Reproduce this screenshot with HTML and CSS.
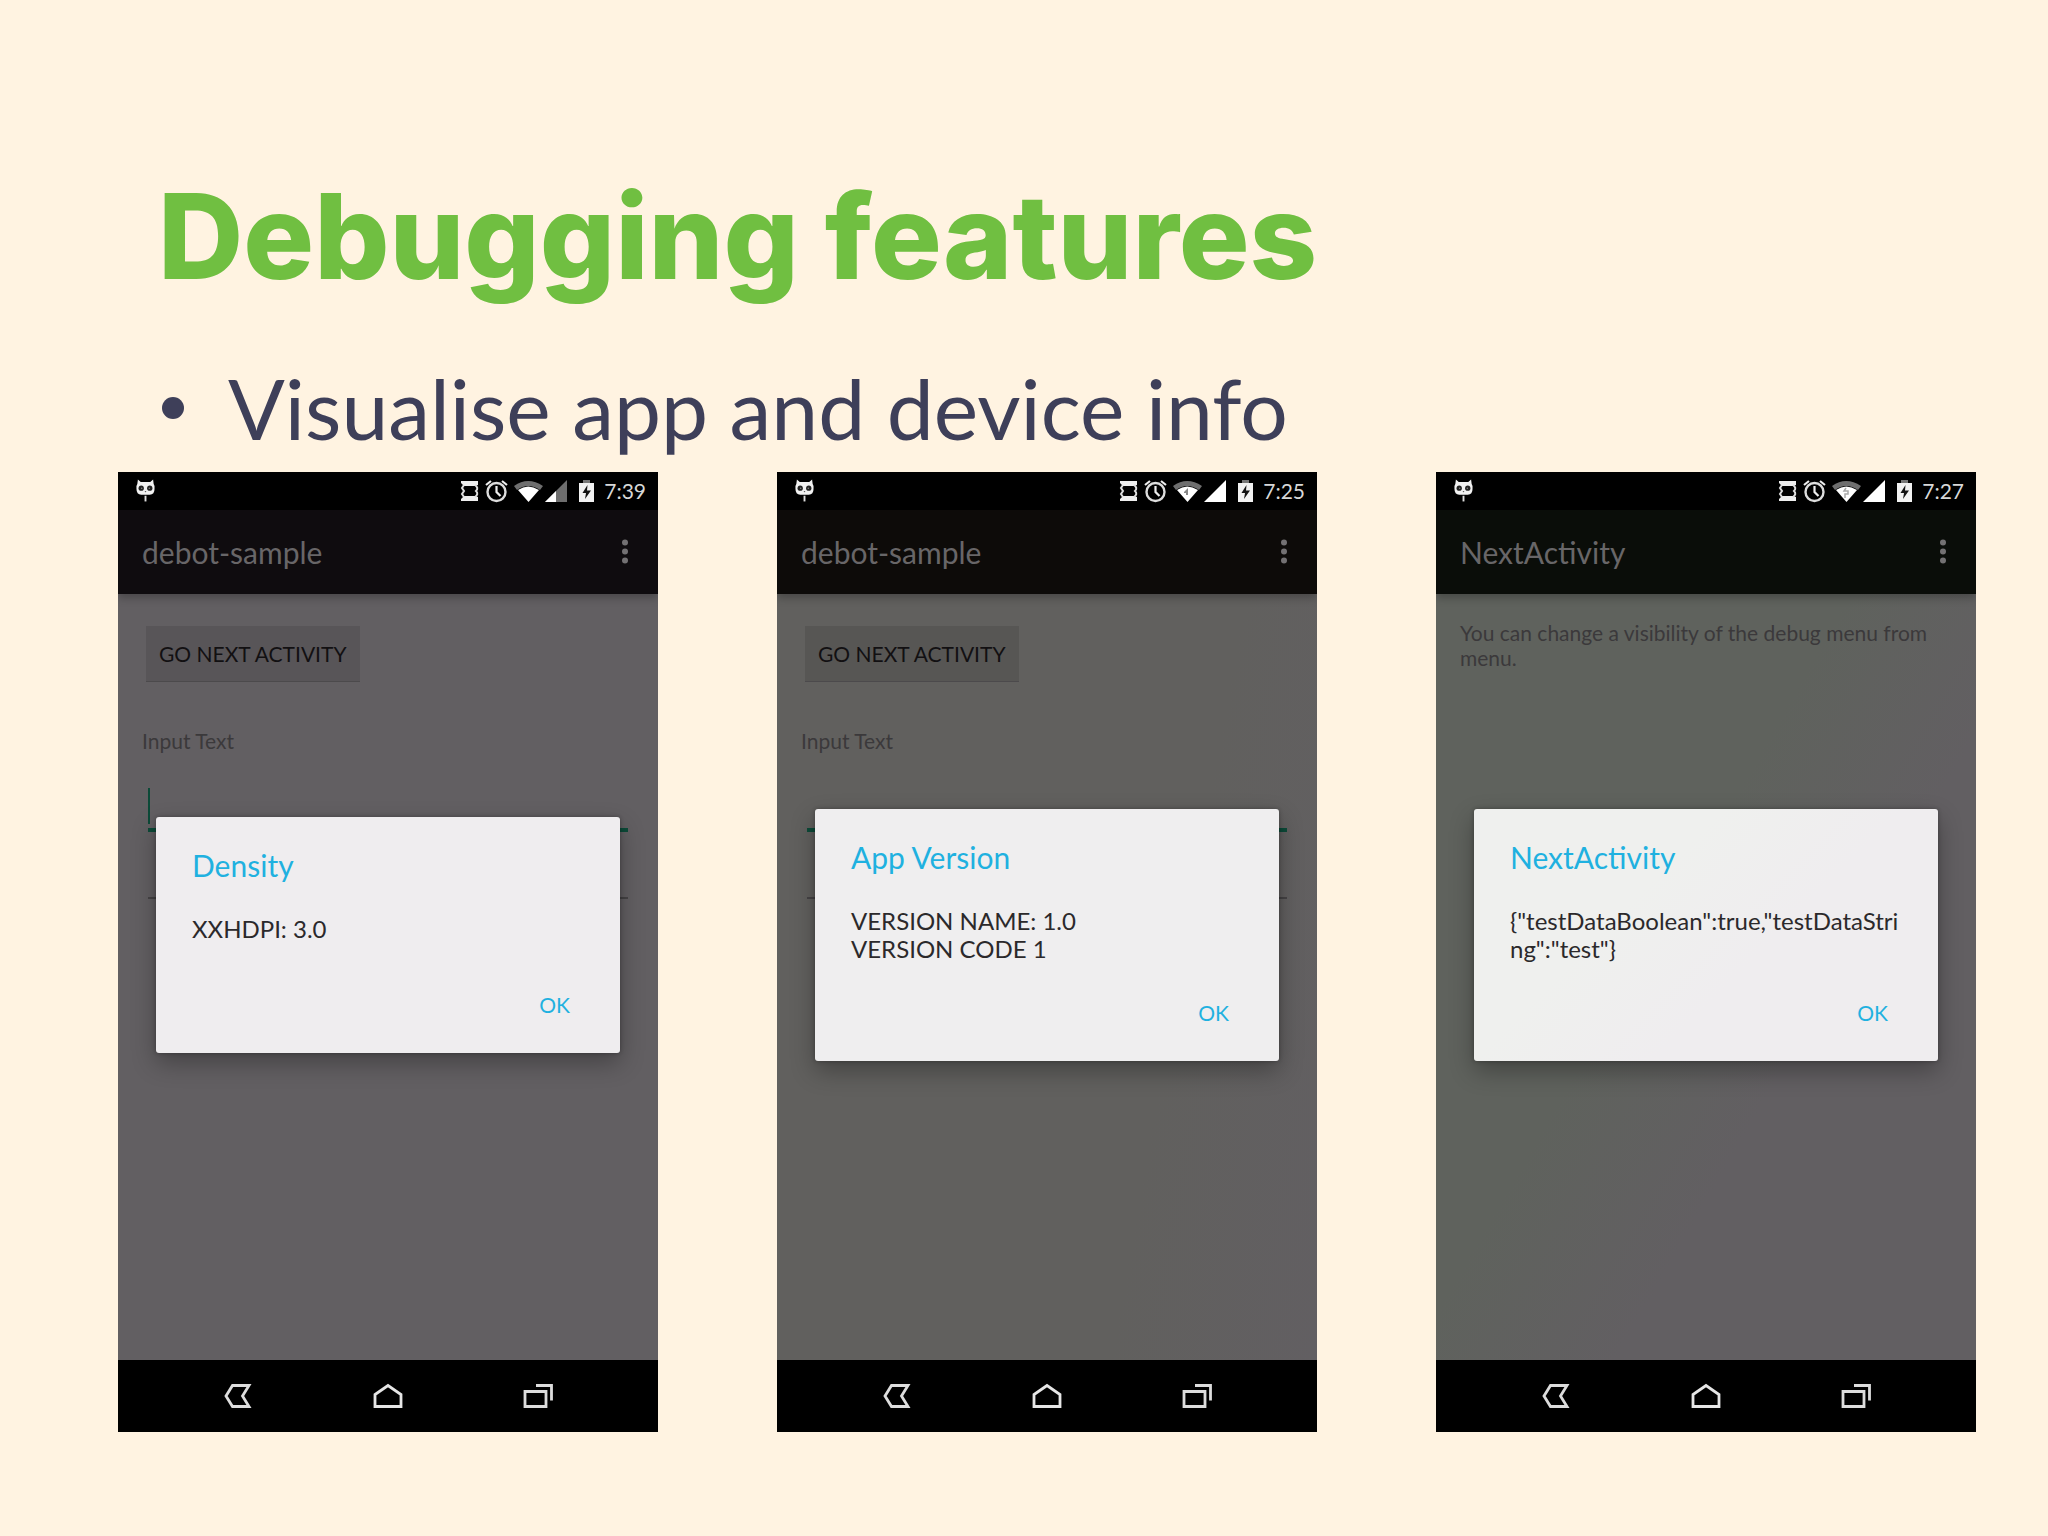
FILE: index.html
```html
<!DOCTYPE html>
<html lang="en">
<head>
<meta charset="utf-8">
<title>Debugging features</title>
<link rel="stylesheet" href="styles.css">
</head>
<body>
<svg class="sprite" aria-hidden="true">
  <symbol id="cat" viewBox="0 0 20 24">
    <path fill="#f2f2f2" d="M2 0l3 2.500h10L18 0l.6 4.500Q20 6 19.500 10q0 6-5 6h-9q-5 0-5-6-.5-4 .9-5.500z"/>
    <circle cx="5.500" cy="9" r="2.800" fill="#222"/><circle cx="14.500" cy="9" r="2.800" fill="#222"/>
    <circle cx="6" cy="9" r=".8" fill="#888"/><circle cx="14" cy="9" r=".8" fill="#888"/>
    <path fill="#555" d="M9 12h2L10 13.500z"/>
    <path fill="#ddd" d="M9 17h2v6H9z"/>
  </symbol>
  <symbol id="rotate" viewBox="0 0 24 24">
    <path fill="#eee" d="M1 2h17v4l-3 1H4L1 4zM1 22h17v-4l-3-1H4l-3 3z"/>
    <path fill="none" stroke="#ddd" stroke-width="2" d="M4 6l-2 3 2 3-2 3 2 3M15 6q4 3 1 6 3 3-1 6"/>
  </symbol>
  <symbol id="alarm" viewBox="0 0 28 24">
    <circle cx="12.500" cy="13" r="9" fill="none" stroke="#ddd" stroke-width="2.400"/>
    <path fill="none" stroke="#eee" stroke-width="2.200" d="M12.500 7v6l4 4M2 6l5-4M23 6l-5-4"/>
  </symbol>
  <symbol id="wifi" viewBox="0 0 32 24">
    <path fill="#6e6e6e" d="M2 7Q16-3 31 7l-3 4Q16 3 5 11z"/>
    <path fill="#fff" d="M6 11Q16 4 27 11L16.500 23z"/>
  </symbol>
  <symbol id="signal-half" viewBox="0 0 28 24">
    <path fill="#6e6e6e" d="M23 1v22H1z"/><path fill="#fff" d="M12 12v11H1z"/>
  </symbol>
  <symbol id="signal" viewBox="0 0 28 24"><path fill="#fff" d="M23 1v22H1z"/></symbol>
  <symbol id="battery" viewBox="0 0 24 24">
    <path fill="#777" d="M11 1h7v3h-7z"/><path fill="#f2f2f2" d="M7 4h15v19H7z"/>
    <path fill="#111" d="M15.500 6l-5 8h3.500l-1 6 6-8.500h-4z"/>
  </symbol>
  <symbol id="more" viewBox="0 0 8 28"><g fill="#737173"><circle cx="4" cy="4.500" r="3"/><circle cx="4" cy="13.500" r="3"/><circle cx="4" cy="22.500" r="3"/></g></symbol>
  <symbol id="back" viewBox="0 0 30 26"><path fill="none" stroke="#ddd" stroke-width="2.800" d="M9.500 2.500h16.500L19.500 13l6.500 10.500H9.500L3 13z"/></symbol>
  <symbol id="home" viewBox="0 0 30 26"><path fill="none" stroke="#e6e6e6" stroke-width="2.800" d="M2 23.500V11.500L15 2.500l13 9v12z"/></symbol>
  <symbol id="recent" viewBox="0 0 30 26"><path fill="none" stroke="#ddd" stroke-width="2.800" d="M2 8.500h21v15H2zM13 2.500h15.500v15"/></symbol>
</svg>

<main class="slide">
  <h1 class="headline">Debugging features</h1>
  <ul class="points"><li>Visualise app and device info</li></ul>

  <div class="phones">
    <section class="phone phone-mauve">
      <header class="status">
        <svg class="cat"><use href="#cat"/></svg>
        <div class="tray"><svg class="w24"><use href="#rotate"/></svg><svg class="w28"><use href="#alarm"/></svg><svg class="w32"><use href="#wifi"/></svg><svg class="w28"><use href="#signal-half"/></svg><svg class="w24"><use href="#battery"/></svg></div>
        <time>7:39</time>
      </header>
      <div class="stage">
        <div class="appbar"><h2>debot-sample</h2><button class="menu" aria-label="More options"><svg><use href="#more"/></svg></button></div>
        <div class="content">
          <button class="next">GO NEXT ACTIVITY</button>
          <label for="text-a">Input Text</label>
          <div class="field"><span class="caret"></span><input id="text-a" type="text"></div>
          <hr class="rule">
        </div>
        <div class="overlay"><div class="dialog" role="dialog" aria-label="Density">
          <h3>Density</h3><p>XXHDPI: 3.0</p><button>OK</button>
        </div></div>
      </div>
      <nav class="nav"><button aria-label="Back"><svg><use href="#back"/></svg></button><button aria-label="Home"><svg><use href="#home"/></svg></button><button aria-label="Recent apps"><svg><use href="#recent"/></svg></button></nav>
    </section>

    <section class="phone phone-warm">
      <header class="status">
        <svg class="cat"><use href="#cat"/></svg>
        <div class="tray"><svg class="w24"><use href="#rotate"/></svg><svg class="w28"><use href="#alarm"/></svg><svg class="w32" viewBox="0 0 32 24"><use href="#wifi"/><path fill="#888" d="M13 13l4-4v7h-2v-2h-2z"/></svg><svg class="w28"><use href="#signal"/></svg><svg class="w24"><use href="#battery"/></svg></div>
        <time>7:25</time>
      </header>
      <div class="stage">
        <div class="appbar"><h2>debot-sample</h2><button class="menu" aria-label="More options"><svg><use href="#more"/></svg></button></div>
        <div class="content">
          <button class="next">GO NEXT ACTIVITY</button>
          <label for="text-b">Input Text</label>
          <div class="field"><input id="text-b" type="text"></div>
          <hr class="rule">
        </div>
        <div class="overlay"><div class="dialog" role="dialog" aria-label="App Version">
          <h3>App Version</h3><p>VERSION NAME: 1.0<br>VERSION CODE 1</p><button>OK</button>
        </div></div>
      </div>
      <nav class="nav"><button aria-label="Back"><svg><use href="#back"/></svg></button><button aria-label="Home"><svg><use href="#home"/></svg></button><button aria-label="Recent apps"><svg><use href="#recent"/></svg></button></nav>
    </section>

    <section class="phone phone-green">
      <header class="status">
        <svg class="cat"><use href="#cat"/></svg>
        <div class="tray"><svg class="w24"><use href="#rotate"/></svg><svg class="w28"><use href="#alarm"/></svg><svg class="w32" viewBox="0 0 32 24"><use href="#wifi"/><path fill="none" stroke="#aaa" stroke-width="1.500" d="M16 9l-2 3h4v3h-3v4"/></svg><svg class="w28"><use href="#signal"/></svg><svg class="w24"><use href="#battery"/></svg></div>
        <time>7:27</time>
      </header>
      <div class="stage">
        <div class="appbar"><h2>NextActivity</h2><button class="menu" aria-label="More options"><svg><use href="#more"/></svg></button></div>
        <div class="content"><p class="note">You can change a visibility of the debug menu from menu.</p></div>
        <div class="overlay"><div class="dialog" role="dialog" aria-label="NextActivity">
          <h3>NextActivity</h3><p>{"testDataBoolean":true,"testDataStri<wbr>ng":"test"}</p><button>OK</button>
        </div></div>
      </div>
      <nav class="nav"><button aria-label="Back"><svg><use href="#back"/></svg></button><button aria-label="Home"><svg><use href="#home"/></svg></button><button aria-label="Recent apps"><svg><use href="#recent"/></svg></button></nav>
    </section>
  </div>
</main>
</body>
</html>
```
FILE: styles.css
```css
* { box-sizing: border-box; margin: 0; padding: 0; }
body { background: #fff3e1; font-family: Lato, sans-serif; }
button, input { font: inherit; color: inherit; background: none; border: 0; }
svg { display: block; }
.sprite { position: absolute; width: 0; height: 0; }

.slide { padding: 160px 72px 104px 118px; }
.headline { padding-left: 40px; font-family: Inter, sans-serif; font-size: 118px; line-height: 152px; font-weight: 800; color: #70bf41; }
.points { list-style: none; margin-top: 48px; padding-left: 44px; font-size: 84px; line-height: 96px; color: #3e3f59; }
.points li { display: flex; align-items: center; gap: 44px; }
.points li::before { content: ""; width: 22px; height: 22px; border-radius: 50%; background: currentColor; }

.phones { display: grid; grid-template-columns: repeat(3, 1fr); gap: 119px; margin-top: 16px; }
.phone { display: flex; flex-direction: column; aspect-ratio: 9 / 16; background: #000; }
.phone-mauve { --bar: #0f0c0f; --page: #625f62; --sheet: #efedef; }
.phone-warm { --bar: #0d0b09; --page: linear-gradient(100deg, #61605e 70%, #625f62); --sheet: #efeeef; }
.phone-green { --bar: #0a0d09; --page: linear-gradient(120deg, #5f625d 45%, #625f62 65%); --sheet: linear-gradient(135deg, #eff0ee 35%, #efedef 60%); }

.status { display: flex; align-items: center; height: 38px; padding: 0 12px 0 18px; color: #d8d8d8; }
.cat { width: 19px; height: 24px; }
.tray { display: flex; margin-left: auto; margin-right: 8px; }
.tray svg { height: 24px; }
.w24 { width: 24px; }
.w28 { width: 28px; }
.w32 { width: 32px; }
.status time { font-size: 21px; line-height: 24px; }

.stage { position: relative; flex: 1; overflow: hidden; background: var(--page); }
.appbar { display: flex; align-items: center; justify-content: space-between; height: 84px; padding: 0 29px 0 24px; background: var(--bar); box-shadow: 0 4px 8px rgba(0, 0, 0, .25); color: #686668; }
.appbar h2 { font-size: 30px; line-height: 36px; font-weight: 400; }
.menu svg { width: 8px; height: 28px; }

.content { display: flex; flex-direction: column; align-items: flex-start; padding: 26px 24px; color: #3b393b; font-size: 21px; line-height: 25px; }
.next { margin: 6px 0 0 4px; padding: 0 13px; height: 56px; color: #121012; background: rgba(0, 0, 0, .1); border-bottom: 1px solid #4c4a4c; }
.content label { margin-top: 46px; }
.field { display: flex; align-self: stretch; margin: 35px 6px 0; height: 44px; border-bottom: 4px solid #0c4a38; }
.caret { width: 2px; height: 36px; background: #0c4a38; }
.field input { flex: 1; min-width: 0; }
.rule { align-self: stretch; margin: 65px 6px 0; border: 0; height: 2px; background: #454345; }

.overlay { position: absolute; inset: 0; display: flex; align-items: center; justify-content: center; padding: 0 38px; }
.dialog { display: flex; flex-direction: column; flex: 1; padding: 30px 36px 34px; background: var(--sheet); border-radius: 3px; box-shadow: 0 10px 24px rgba(0, 0, 0, .3), 0 0 4px rgba(0, 0, 0, .3); }
.dialog h3 { font-size: 30px; line-height: 36px; font-weight: 400; color: #1fb1e0; }
.dialog p { min-height: 40px; margin-top: 32px; font-size: 24px; line-height: 28px; color: #2b292b; }
.dialog button { align-self: flex-end; margin: 36px 14px 0 0; font-size: 21px; line-height: 28px; color: #1fb1e0; }

.nav { display: flex; align-items: center; justify-content: center; gap: 120px; height: 72px; }
.nav svg { width: 30px; height: 26px; }
```
